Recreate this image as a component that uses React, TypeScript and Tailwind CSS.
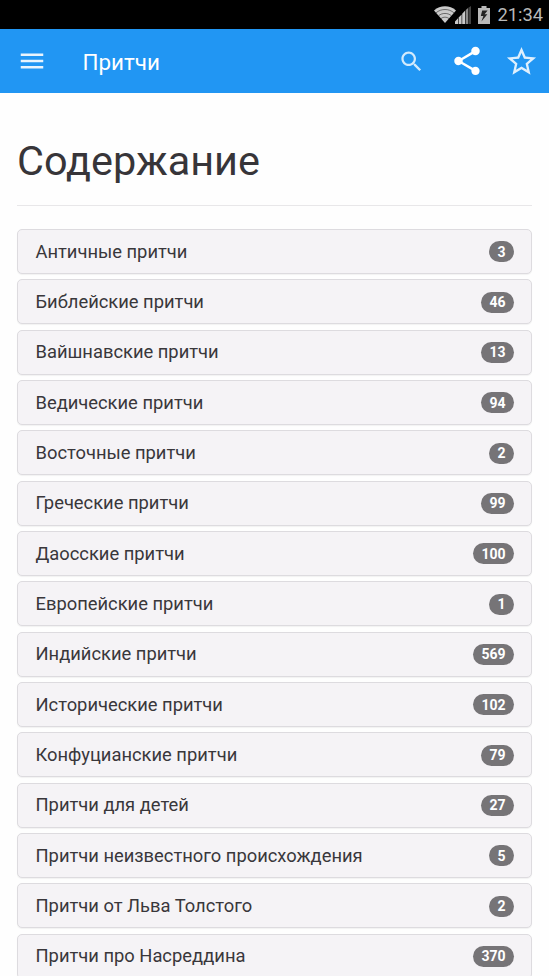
const categories = [
  { title: "Античные притчи", count: 3 },
  { title: "Библейские притчи", count: 46 },
  { title: "Вайшнавские притчи", count: 13 },
  { title: "Ведические притчи", count: 94 },
  { title: "Восточные притчи", count: 2 },
  { title: "Греческие притчи", count: 99 },
  { title: "Даосские притчи", count: 100 },
  { title: "Европейские притчи", count: 1 },
  { title: "Индийские притчи", count: 569 },
  { title: "Исторические притчи", count: 102 },
  { title: "Конфуцианские притчи", count: 79 },
  { title: "Притчи для детей", count: 27 },
  { title: "Притчи неизвестного происхождения", count: 5 },
  { title: "Притчи от Льва Толстого", count: 2 },
  { title: "Притчи про Насреддина", count: 370 },
];

function StatusBar() {
  return (
    <div className="flex h-[29px] shrink-0 items-center justify-end bg-black pr-[6px] text-[#b9b9b9]">
      {/* Wifi */}
      <svg className="h-[17px] w-[22px]" viewBox="0 0 22 17">
        <path d="M0 4.4C6.2-1.2 15.8-1.2 22 4.4L11 17z" fill="#cacaca" />
        <path
          d="M2 6.8c5.2-4.4 12.8-4.4 18 0M4.6 9.7c3.6-3 9.2-3 12.8 0M7 12.5c2.2-1.8 5.8-1.8 8 0"
          fill="none"
          stroke="#000"
          strokeOpacity="0.6"
          strokeWidth="0.8"
        />
      </svg>

      {/* Signal */}
      <svg className="-ml-[1px] h-[18px] w-[17px]" viewBox="0 0 17 18">
        <path d="M0 18v-2.6l3-3.2V18zM3.6 18v-6.4l3-3.2V18zM7.2 18V7.8l3-3.2V18z" fill="#c8c8c8" />
        <path d="M10.8 18V4l2.2-2V18z" fill="#8a8a8a" />
        <path d="M13.3 18V1.8L16 0v18z" fill="#444" />
      </svg>

      {/* Battery */}
      <svg className="ml-[6px] h-[18px] w-[12px]" viewBox="0 0 12 18">
        <path d="M3.5 0h5v2H12v16H0V2h3.5z" fill="#b9b9b9" />
        <path d="M9.6 4.6H4.2L2.8 10h2.6l-2 5.4 6-7.2H6.6z" fill="#222" />
      </svg>

      <span className="mt-[2px] ml-[7px] text-[18.3px] leading-none">21:34</span>
    </div>
  );
}

function AppBar() {
  return (
    <header className="flex h-16 shrink-0 items-center bg-[#2196f3] pr-[10px] pl-[17px] text-white">
      <svg className="size-[30px]" viewBox="0 0 24 24" fill="currentColor" opacity="0.9">
        <path d="M3 18h18v-2H3v2zm0-5h18v-2H3v2zm0-7v2h18V6H3z" />
      </svg>

      <h2 className="mt-[2px] ml-[35.5px] grow text-[22.4px] leading-none">Притчи</h2>

      <svg className="size-[27px]" viewBox="0 0 24 24" fill="currentColor" opacity="0.8">
        <path d="M15.5 14h-.79l-.28-.27C15.41 12.59 16 11.11 16 9.5 16 5.91 13.09 3 9.5 3S3 5.91 3 9.5 5.91 16 9.5 16c1.61 0 3.09-.59 4.23-1.57l.27.28v.79l5 4.99L20.49 19l-4.99-5zm-6 0C7.01 14 5 11.99 5 9.5S7.01 5 9.5 5 14 7.01 14 9.5 11.99 14 9.5 14z" />
      </svg>
      <svg className="ml-[25px] size-[34px]" viewBox="0 0 24 24" fill="currentColor">
        <path d="M18 16.08c-.76 0-1.44.3-1.96.77L8.91 12.7c.05-.23.09-.46.09-.7s-.04-.47-.09-.7l7.05-4.11c.54.5 1.25.81 2.04.81 1.66 0 3-1.34 3-3s-1.34-3-3-3-3 1.34-3 3c0 .24.04.47.09.7L8.04 9.81C7.5 9.31 6.79 9 6 9c-1.66 0-3 1.34-3 3s1.34 3 3 3c.79 0 1.5-.31 2.04-.81l7.12 4.16c-.05.21-.08.43-.08.65 0 1.61 1.31 2.92 2.92 2.92 1.61 0 2.92-1.31 2.92-2.92s-1.31-2.92-2.92-2.92z" />
      </svg>
      <svg className="ml-[20px] size-[35px]" viewBox="0 0 24 24" fill="currentColor" opacity="0.85">
        <path d="M22 9.24l-7.19-.62L12 2 9.19 8.63 2 9.24l5.46 4.73L5.82 21 12 17.27 18.18 21l-1.63-7.03L22 9.24zM12 15.4l-3.76 2.27 1-4.28-3.32-2.88 4.38-.38L12 6.1l1.71 4.04 4.38.38-3.32 2.88 1 4.28L12 15.4z" />
      </svg>
    </header>
  );
}

export default function App() {
  return (
    <div className="flex h-[976px] w-[549px] flex-col overflow-hidden bg-[#fefefe] font-['Roboto',sans-serif]">
      <StatusBar />
      <AppBar />

      <main className="min-h-0 grow overflow-hidden px-[17px] pt-[44px]">
        <h1 className="h-[69px] border-b border-[#e8e7e9] text-[41.4px] leading-[49px] text-[#373539]">
          Содержание
        </h1>

        <ul className="mt-[23px] flex flex-col gap-[5.33px]">
          {categories.map((category) => (
            <li
              key={category.title}
              className="flex h-[45px] shrink-0 items-center justify-between rounded-[5px] border border-[#dddbdf] bg-[#f5f3f6] pt-[0.5px] pr-[17.5px] pl-[17.5px] shadow-[0_1px_1px_rgba(0,0,0,0.05)]"
            >
              <span className="text-[18.35px] leading-[22px] text-[#39373b]">{category.title}</span>
              <span className="flex h-[21px] items-center rounded-full bg-[#767477] px-[8px] text-[14px] leading-none font-bold text-white">
                {category.count}
              </span>
            </li>
          ))}
        </ul>
      </main>
    </div>
  );
}
